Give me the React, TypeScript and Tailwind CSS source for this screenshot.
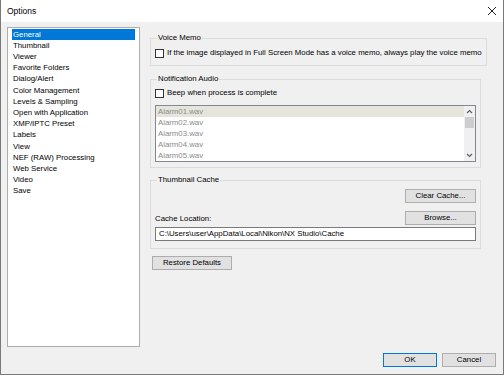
import React, { useState } from "react";

const categories = [
  "General",
  "Thumbnail",
  "Viewer",
  "Favorite Folders",
  "Dialog/Alert",
  "Color Management",
  "Levels & Sampling",
  "Open with Application",
  "XMP/IPTC Preset",
  "Labels",
  "View",
  "NEF (RAW) Processing",
  "Web Service",
  "Video",
  "Save",
];

const alarms = ["Alarm01.wav", "Alarm02.wav", "Alarm03.wav", "Alarm04.wav", "Alarm05.wav"];

// windows style push button
const Button: React.FC<{ label: string; className?: string; primary?: boolean }> = ({
  label,
  className = "",
  primary,
}) => (
  <button
    type="button"
    className={`h-[14px] flex items-center justify-center bg-[#e1e1e1] text-[7.8px] leading-none text-black border ${
      primary ? "border-[#0078d7]" : "border-[#adadad]"
    } ${className}`}
  >
    {label}
  </button>
);

const CheckBox: React.FC<{ label: string }> = ({ label }) => {
  const [checked, setChecked] = useState(false);
  return (
    <label className="flex items-center gap-[3px] cursor-default" onClick={() => setChecked(!checked)}>
      <span className="w-[9px] h-[9px] shrink-0 border border-[#333333] bg-white flex items-center justify-center text-[7px] leading-none">
        {checked ? "✓" : ""}
      </span>
      <span className="text-[7.8px] leading-[10px] text-black whitespace-nowrap">{label}</span>
    </label>
  );
};

const Group: React.FC<{ title: string; className?: string; children: React.ReactNode }> = ({
  title,
  className = "",
  children,
}) => (
  <fieldset className={`border border-[#dcdcdc] px-[4px] ${className}`}>
    <legend className="ml-[2px] px-[1px] text-[7.8px] leading-[10px] text-black">{title}</legend>
    {children}
  </fieldset>
);

export default function App() {
  const [selected, setSelected] = useState(0);

  return (
    <div
      className="w-[504px] h-[375px] flex flex-col bg-white border-x border-b border-[#7a7a7a] overflow-hidden"
      style={{ fontFamily: '"Liberation Sans", Arial, sans-serif' }}
    >
      {/* 타이틀 바 */}
      <div className="h-[22px] shrink-0 flex items-center justify-between pl-[6px] pr-[5px] bg-white">
        <span className="text-[8.5px] text-black">Options</span>
        <svg width="10" height="10" viewBox="0 0 10 10" className="mr-[1px]">
          <path d="M1 1 L9 9 M9 1 L1 9" stroke="#222" strokeWidth="1" />
        </svg>
      </div>

      {/* 본문 */}
      <div className="flex-1 flex flex-col bg-[#f0f0f0] pt-[5px] pl-[6px] pr-[6px]">
        <div className="flex gap-[10px]">
          {/* 카테고리 목록 */}
          <div className="w-[133px] h-[320px] bg-white border border-[#adadad] pt-[1px] px-[4px]">
            {categories.map((c, i) => (
              <div
                key={c}
                onClick={() => setSelected(i)}
                className={`h-[11.2px] flex items-center pl-[1px] text-[7.8px] leading-none ${
                  i === selected ? "bg-[#0078d7] text-white" : "text-black"
                }`}
              >
                {c}
              </div>
            ))}
          </div>

          {/* 설정 패널 */}
          <div className="w-[331px] flex flex-col pt-[6px]">
            <Group title="Voice Memo" className="h-[33px] pt-[5px]">
              <CheckBox label="If the image displayed in Full Screen Mode has a voice memo, always play the voice memo" />
            </Group>

            <Group title="Notification Audio" className="h-[94px] mt-[8px] pt-[4px]">
              <CheckBox label="Beep when process is complete" />
              <div className="mt-[7px] h-[57px] bg-white border border-[#828790] flex">
                <div className="flex-1 flex flex-col">
                  {alarms.map((a, i) => (
                    <div
                      key={a}
                      className={`h-[11px] flex items-center pl-[2px] text-[7.8px] leading-none text-[#8a8a8a] ${
                        i === 0 ? "bg-[#e6e5dc]" : ""
                      }`}
                    >
                      {a}
                    </div>
                  ))}
                </div>
                {/* 스크롤바 */}
                <div className="w-[11px] flex flex-col items-center bg-[#f0f0f0]">
                  <svg width="11" height="11" viewBox="0 0 11 11">
                    <path d="M3 7 L5.5 4.5 L8 7" stroke="#606060" strokeWidth="1.2" fill="none" />
                  </svg>
                  <div className="w-[9px] h-[11px] bg-[#cdcdcd]" />
                  <div className="flex-1" />
                  <svg width="11" height="11" viewBox="0 0 11 11">
                    <path d="M3 4 L5.5 6.5 L8 4" stroke="#606060" strokeWidth="1.2" fill="none" />
                  </svg>
                </div>
              </div>
            </Group>

            <Group title="Thumbnail Cache" className="h-[74px] mt-[7px]">
              <div className="flex justify-end mt-[4px]">
                <Button label="Clear Cache..." className="w-[71px]" />
              </div>
              <div className="flex items-center justify-between mt-[8px]">
                <span className="text-[7.8px] leading-none text-black mt-[2px]">Cache Location:</span>
                <Button label="Browse..." className="w-[71px] h-[13px]" />
              </div>
              <div className="mt-[2px] h-[14px] bg-white border border-[#7a7a7a] flex items-center pl-[3px] text-[7.8px] leading-none text-black">
                C:\Users\user\AppData\Local\Nikon\NX Studio\Cache
              </div>
            </Group>

            <div className="mt-[7px] ml-[2px]">
              <Button label="Restore Defaults" className="w-[80px]" />
            </div>
          </div>
        </div>

        {/* 하단 버튼 */}
        <div className="flex justify-end gap-[5px] mt-[6px] pr-[1px]">
          <Button label="OK" primary className="w-[54px]" />
          <Button label="Cancel" className="w-[54px]" />
        </div>
      </div>
    </div>
  );
}
